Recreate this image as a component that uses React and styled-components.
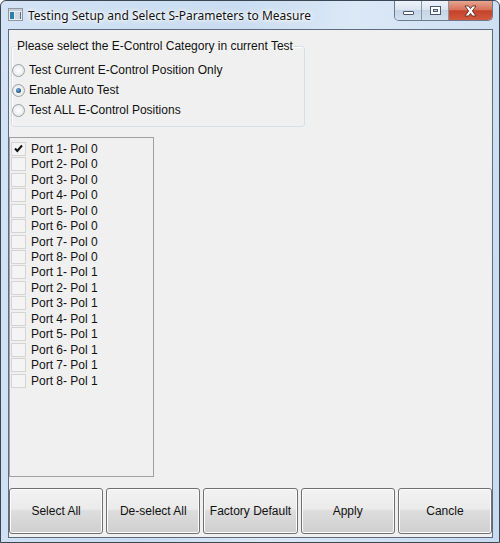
import React, { useState } from 'react';
import styled, { createGlobalStyle } from 'styled-components';

const GlobalStyle = createGlobalStyle`
  html, body {
    margin: 0;
    padding: 0;
    background: #ffffff;
  }
  * {
    box-sizing: border-box;
  }
`;

const radioOptions = [
  'Test Current E-Control Position Only',
  'Enable Auto Test',
  'Test ALL E-Control Positions',
];

const ports = [];
for (let pol = 0; pol < 2; pol++) {
  for (let p = 1; p <= 8; p++) {
    ports.push(`Port ${p}- Pol ${pol}`);
  }
}

const buttons = ['Select All', 'De-select All', 'Factory Default', 'Apply', 'Cancle'];

const AppIcon = () => (
  <svg width='15' height='13' viewBox='0 0 15 13'>
    <rect x='0.5' y='0.5' width='14' height='12' fill='#e9edf1' stroke='#8d98a3' />
    <rect x='1' y='1' width='13' height='2' fill='#c5ced8' />
    <rect x='2' y='4' width='4' height='7' fill='#2e7fa3' />
    <rect x='7' y='4' width='5' height='7' fill='#cfd8e0' />
    <rect x='12' y='4' width='1' height='7' fill='#5f6d7a' />
  </svg>
);

const CheckMark = () => (
  <svg width='11' height='11' viewBox='0 0 11 11'>
    <path d='M2 5.5 L4.3 8 L9 2.5' fill='none' stroke='#111' strokeWidth='2' />
  </svg>
);

const App = () => {
  const [mode, setMode] = useState(1);
  const [checked, setChecked] = useState([0]);

  const toggle = (i) => {
    setChecked((c) => (c.includes(i) ? c.filter((x) => x !== i) : [...c, i]));
  };

  return (
    <>
      <GlobalStyle />
      <Window>
        <TitleBar>
          <AppIcon />
          <Title>Testing Setup and Select S-Parameters to Measure</Title>
          <CaptionGroup>
            <CaptionBtn>
              <MinGlyph />
            </CaptionBtn>
            <CaptionBtn>
              <MaxGlyph />
            </CaptionBtn>
            <CloseBtn>
              <svg width='15' height='12' viewBox='0 0 15 12'>
                <path
                  d='M2 1 L5.5 1 L7.5 3.6 L9.5 1 L13 1 L9.4 6 L13 11 L9.5 11 L7.5 8.4 L5.5 11 L2 11 L5.6 6 Z'
                  fill='#ffffff'
                  stroke='#5a2a20'
                  strokeWidth='0.9'
                />
              </svg>
            </CloseBtn>
          </CaptionGroup>
        </TitleBar>
        <Client>
          <GroupBox>
            <Legend>Please select the E-Control Category in current Test</Legend>
            {radioOptions.map((label, i) => (
              <RadioRow key={label} onClick={() => setMode(i)}>
                <Radio $on={mode === i} />
                <span>{label}</span>
              </RadioRow>
            ))}
          </GroupBox>
          <ListBox>
            {ports.map((label, i) => (
              <ListItem key={label} onClick={() => toggle(i)}>
                <CheckBox>{checked.includes(i) && <CheckMark />}</CheckBox>
                <span>{label}</span>
              </ListItem>
            ))}
          </ListBox>
          <ButtonRow>
            {buttons.map((b) => (
              <Btn key={b} type='button'>
                {b}
              </Btn>
            ))}
          </ButtonRow>
        </Client>
      </Window>
    </>
  );
};

const Window = styled.div`
  width: 500px;
  height: 543px;
  display: flex;
  flex-direction: column;
  border: 1px solid #3c4552;
  border-radius: 6px 6px 0 0;
  background: linear-gradient(100deg, #d3e3f5 0%, #c9dcf1 40%, #dbe8f6 60%, #c7daf0 100%);
  overflow: hidden;
`;

const TitleBar = styled.div`
  height: 28px;
  display: flex;
  align-items: flex-start;
  padding-left: 7px;
  flex-shrink: 0;

  & > svg {
    margin-top: 7px;
  }
`;

const Title = styled.div`
  margin-left: 5px;
  margin-top: 7px;
  font: 12px 'Noto Sans', 'Liberation Sans', sans-serif;
  line-height: 16px;
  color: #111;
  text-shadow: 0 0 6px #fff, 0 0 4px #fff, 0 0 2px #fff;
`;

const CaptionGroup = styled.div`
  margin-left: auto;
  margin-right: 6px;
  display: flex;
  height: 20px;
  border: 1px solid #6a7a8e;
  border-top: none;
  border-radius: 0 0 5px 5px;
  overflow: hidden;
`;

const CaptionBtn = styled.div`
  width: 27px;
  height: 100%;
  display: flex;
  align-items: center;
  justify-content: center;
  border-right: 1px solid #8695a8;
  background: linear-gradient(#eef3f9 0%, #dbe5f1 45%, #c6d4e6 50%, #d2dfee 100%);
`;

const MinGlyph = styled.span`
  width: 11px;
  height: 4px;
  margin-top: 5px;
  background: #fff;
  border: 1px solid #4a5a6e;
  border-radius: 1px;
`;

const MaxGlyph = styled.span`
  width: 11px;
  height: 9px;
  background: transparent;
  border: 1px solid #4a5a6e;
  box-shadow: inset 0 0 0 2px #fff, inset 0 0 0 3px #4a5a6e;
  margin-top: -1px;
`;

const CloseBtn = styled.div`
  width: 43px;
  height: 100%;
  display: flex;
  align-items: center;
  justify-content: center;
  background: linear-gradient(#e6a592 0%, #d8735b 45%, #c5422a 52%, #d15a3c 100%);
`;

const Client = styled.div`
  flex: 1;
  margin: 0 6px 4px 7px;
  border: 1px solid #5c6b7d;
  background: #f0f0f0;
  display: flex;
  flex-direction: column;
  font: 12px 'Liberation Sans', Arial, sans-serif;
  color: #111;
`;

const GroupBox = styled.fieldset`
  margin: 9px 0 0 2px;
  padding: 7px 0 6px 0;
  width: 294px;
  border: 1px solid #d5dfe8;
  border-radius: 3px;
  box-shadow: inset 1px 1px 0 #fff;
`;

const Legend = styled.legend`
  margin-left: 4px;
  padding: 0 1px;
  line-height: 14px;
`;

const RadioRow = styled.div`
  height: 20px;
  display: flex;
  align-items: center;
  gap: 4px;
  cursor: default;
`;

const Radio = styled.span`
  width: 13px;
  height: 13px;
  border-radius: 50%;
  border: 1px solid #9aa0a6;
  background: radial-gradient(circle at 50% 50%, #ffffff 0%, #f4f4f4 40%, #d9dde2 100%);
  display: flex;
  align-items: center;
  justify-content: center;

  &::after {
    content: '';
    display: ${(p) => (p.$on ? 'block' : 'none')};
    width: 5px;
    height: 5px;
    border-radius: 50%;
    background: radial-gradient(circle at 40% 35%, #7fb3dd 0%, #2a5c8c 60%, #173a5e 100%);
  }
`;

const ListBox = styled.div`
  margin-top: 10px;
  width: 145px;
  height: 340px;
  border: 1px solid #a0a0a0;
  background: #f0f0f0;
  padding-top: 3px;
`;

const ListItem = styled.div`
  height: 15.47px;
  display: flex;
  align-items: center;
  padding-left: 1px;
  gap: 5px;
  white-space: nowrap;
  cursor: default;
`;

const CheckBox = styled.span`
  width: 15px;
  height: 14px;
  border: 1px solid #d4d4d4;
  background: #f4f4f4;
  display: flex;
  align-items: center;
  justify-content: center;
  flex-shrink: 0;
`;

const ButtonRow = styled.div`
  margin-top: auto;
  margin-bottom: 3px;
  display: flex;
  gap: 3px;
`;

const Btn = styled.button`
  flex: 1;
  height: 46px;
  border: 1px solid #707070;
  border-radius: 3px;
  box-shadow: inset 0 0 0 1px #fcfcfc;
  background: linear-gradient(#f2f2f2 0%, #ebebeb 45%, #dddddd 50%, #cfcfcf 100%);
  font: 12px 'Liberation Sans', Arial, sans-serif;
  color: #111;
  padding: 0;
`;

export default App;
